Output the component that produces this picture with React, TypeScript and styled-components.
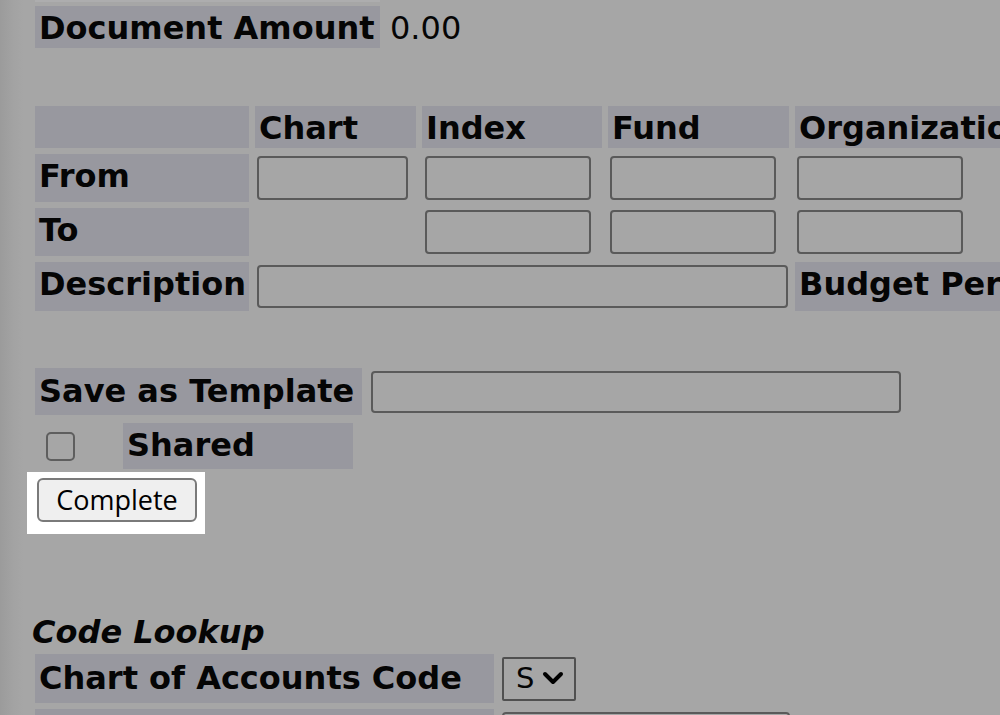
import React from 'react';
import styled, { createGlobalStyle } from 'styled-components';

// ============================================================================
// Global
// ============================================================================

const GlobalStyle = createGlobalStyle`
  html, body {
    margin: 0;
    padding: 0;
    overflow: hidden;
    width: 1000px;
    height: 715px;
  }

  body {
    background: linear-gradient(to right, #9b9b9b 0px, #a3a3a3 14px, #a6a6a6 24px);
    font-family: "DejaVu Sans", Verdana, sans-serif;
    font-size: 32px;
    color: #050505;
  }
`;

// ============================================================================
// Styled Components
// ============================================================================

const Page = styled.div`
  display: flex;
  flex-direction: column;
  align-items: flex-start;
  padding-left: 35px;
  width: 1200px;
`;

const TopStrip = styled.div`
  width: 345px;
  height: 2px;
  margin-bottom: 4px;
  background: #adadae;
`;

const Row = styled.div<{ $h: number; $gap?: number; $mt?: number }>`
  display: flex;
  align-items: center;
  gap: ${p => p.$gap ?? 6}px;
  height: ${p => p.$h}px;
  margin-top: ${p => p.$mt ?? 0}px;
`;

const LabelCell = styled.div<{ $w?: number; $pt?: number }>`
  box-sizing: border-box;
  align-self: stretch;
  width: ${p => (p.$w ? `${p.$w}px` : 'auto')};
  padding: ${p => p.$pt ?? 3}px 4px 0;
  background: #98989f;
  font-weight: bold;
  white-space: nowrap;
  overflow: hidden;
`;

const ValueText = styled.div`
  align-self: stretch;
  padding: 3px 4px 0;
  white-space: nowrap;
`;

const FormGrid = styled.div`
  display: grid;
  grid-template-columns: 214px 161px 180px 181px 260px;
  grid-template-rows: 42px 48px 48px 49px;
  column-gap: 6px;
  row-gap: 6px;
  margin-top: 58px;
`;

const GridCell = styled.div<{ $span?: string; $pl?: number }>`
  display: flex;
  align-items: center;
  grid-column: ${p => p.$span ?? 'auto'};
  padding-left: ${p => p.$pl ?? 2}px;
`;

const TextBox = styled.div<{ $w: number; $h: number }>`
  box-sizing: border-box;
  width: ${p => p.$w}px;
  height: ${p => p.$h}px;
  border: 2px solid #5a5a5a;
  border-radius: 4px;
  background: #a6a6a6;
`;

const CheckCell = styled.div`
  display: flex;
  align-items: center;
  width: 82px;
  padding-left: 11px;
  box-sizing: border-box;
`;

const CheckBox = styled.div`
  box-sizing: border-box;
  width: 29px;
  height: 29px;
  border: 2px solid #5e5e5e;
  border-radius: 5px;
`;

const Highlight = styled.div`
  box-sizing: border-box;
  width: 178px;
  height: 62px;
  margin: 3px 0 0 -8px;
  padding: 6px 0 0 10px;
  background: #ffffff;
`;

const Button = styled.button`
  box-sizing: border-box;
  width: 160px;
  height: 44px;
  padding: 0 0 2px;
  border: 2px solid #7a7a7a;
  border-radius: 6px;
  background: #efefef;
  font-family: "Open Sans", "Noto Sans", sans-serif;
  font-size: 27px;
  color: #000;
`;

const Heading = styled.div`
  height: 38px;
  line-height: 33px;
  margin: 82px 0 0 -3px;
  font-style: italic;
  font-weight: bold;
`;

const SelectBox = styled.div<{ $w: number }>`
  box-sizing: border-box;
  display: flex;
  align-items: center;
  gap: 8px;
  width: ${p => p.$w}px;
  height: 44px;
  padding: 0 0 2px 12px;
  border: 2px solid #505050;
  border-radius: 2px;
  font-size: 29px;
`;

// ============================================================================
// App
// ============================================================================

const Chevron = () => (
  <svg width="22" height="14" viewBox="0 0 22 14">
    <polyline
      points="3,3 11,11 19,3"
      fill="none"
      stroke="#000"
      strokeWidth="4"
      strokeLinecap="round"
      strokeLinejoin="round"
    />
  </svg>
);

export default function App() {
  return (
    <>
      <GlobalStyle />
      <Page>
        <TopStrip />
        <Row $h={42}>
          <LabelCell $w={345}>Document Amount</LabelCell>
          <ValueText>0.00</ValueText>
        </Row>

        <FormGrid>
          <LabelCell />
          <LabelCell>Chart</LabelCell>
          <LabelCell>Index</LabelCell>
          <LabelCell>Fund</LabelCell>
          <LabelCell>Organization</LabelCell>

          <LabelCell>From</LabelCell>
          <GridCell><TextBox $w={151} $h={44} /></GridCell>
          <GridCell $pl={3}><TextBox $w={166} $h={44} /></GridCell>
          <GridCell><TextBox $w={166} $h={44} /></GridCell>
          <GridCell><TextBox $w={166} $h={44} /></GridCell>

          <LabelCell>To</LabelCell>
          <GridCell />
          <GridCell $pl={3}><TextBox $w={166} $h={44} /></GridCell>
          <GridCell><TextBox $w={166} $h={44} /></GridCell>
          <GridCell><TextBox $w={166} $h={44} /></GridCell>

          <LabelCell>Description</LabelCell>
          <GridCell $span="2 / 5"><TextBox $w={531} $h={43} /></GridCell>
          <LabelCell>Budget Period</LabelCell>
        </FormGrid>

        <Row $h={47} $gap={9} $mt={57}>
          <LabelCell $w={327} $pt={4}>Save as Template</LabelCell>
          <TextBox $w={530} $h={42} />
        </Row>

        <Row $h={46} $mt={8}>
          <CheckCell><CheckBox /></CheckCell>
          <LabelCell $w={230}>Shared</LabelCell>
        </Row>

        <Highlight>
          <Button>Complete</Button>
        </Highlight>

        <Heading>Code Lookup</Heading>

        <Row $h={49} $gap={8}>
          <LabelCell $w={459} $pt={5}>Chart of Accounts Code</LabelCell>
          <SelectBox $w={74}>
            <span>S</span>
            <Chevron />
          </SelectBox>
        </Row>

        <Row $h={49} $gap={8} $mt={6}>
          <LabelCell $w={459} $pt={5}>Index</LabelCell>
          <TextBox $w={288} $h={44} />
        </Row>
      </Page>
    </>
  );
}
